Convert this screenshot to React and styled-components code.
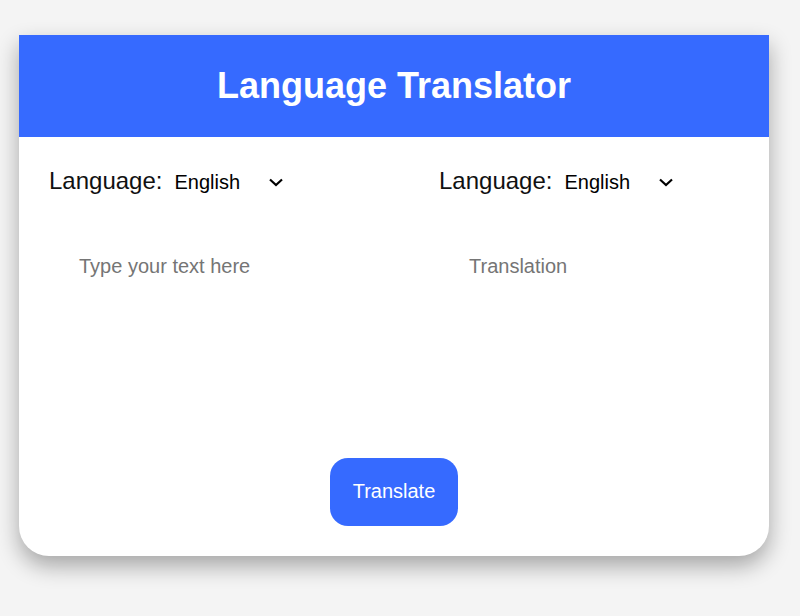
import React, { useState } from "react";
import styled, { createGlobalStyle } from "styled-components";

const GlobalStyle = createGlobalStyle`
  html, body {
    margin: 0;
    background: #f4f4f4;
    font-family: "Liberation Sans", Arial, sans-serif;
  }
`;

const Page = styled.div`
  padding: 35px 0 60px 19px;
`;

const Card = styled.div`
  width: 750px;
  background: #fff;
  border-radius: 0 0 30px 30px;
  box-shadow: 0 10px 22px rgba(0, 0, 0, 0.32);
  overflow: hidden;
`;

const Header = styled.h1`
  margin: 0;
  padding: 30px 0;
  background: #366aff;
  color: #fff;
  font-size: 36px;
  line-height: 42px;
  font-weight: bold;
  text-align: center;
`;

const Body = styled.div`
  padding: 30px;
  display: flex;
  flex-direction: column;
  align-items: center;
`;

const Columns = styled.div`
  align-self: stretch;
  display: grid;
  grid-template-columns: 300px 300px;
  column-gap: 90px;
`;

const Column = styled.div`
  display: flex;
  flex-direction: column;
`;

const LangRow = styled.div`
  display: flex;
  align-items: baseline;
  height: 28px;
`;

const Label = styled.label`
  font-size: 24px;
  color: #111;
`;

const SelectWrap = styled.span`
  position: relative;
  margin-left: 8px;
  display: inline-block;
`;

const Select = styled.select`
  appearance: none;
  -webkit-appearance: none;
  width: 120px;
  padding: 0 0 0 4px;
  border: none;
  outline: none;
  background: transparent;
  font-family: "Liberation Sans", Arial, sans-serif;
  font-size: 20px;
  color: #000;
  cursor: pointer;
`;

const Chevron = styled.svg`
  position: absolute;
  left: 98px;
  top: 50%;
  margin-top: -4px;
  pointer-events: none;
`;

const TextBox = styled.textarea`
  margin-top: 30px;
  height: 203px;
  padding: 30px;
  box-sizing: border-box;
  border: none;
  outline: none;
  resize: none;
  font-family: "Liberation Sans", Arial, sans-serif;
  font-size: 20px;
  line-height: 23px;
  color: #222;
  background: transparent;
  &::placeholder {
    color: #757575;
  }
`;

const Button = styled.button`
  margin-top: 30px;
  padding: 22px 23px 23px;
  border: none;
  border-radius: 18px;
  background: #366aff;
  color: #fff;
  font-family: "Liberation Sans", Arial, sans-serif;
  font-size: 20px;
  line-height: 23px;
  cursor: pointer;
`;

const languages = ["English", "Spanish", "French", "German", "Italian"];

function LanguagePicker({ value, onChange }) {
  return (
    <LangRow>
      <Label>Language:</Label>
      <SelectWrap>
        <Select value={value} onChange={(e) => onChange(e.target.value)}>
          {languages.map((l) => (
            <option key={l} value={l}>{l}</option>
          ))}
        </Select>
        <Chevron width="16" height="9" viewBox="0 0 16 9">
          <path d="M2 1.5 L8 7 L14 1.5" fill="none" stroke="#000" strokeWidth="2.2" />
        </Chevron>
      </SelectWrap>
    </LangRow>
  );
}

export default function App() {
  const [from, setFrom] = useState("English");
  const [to, setTo] = useState("English");
  const [text, setText] = useState("");
  const [result, setResult] = useState("");

  return (
    <>
      <GlobalStyle />
      <Page>
        <Card>
          <Header>Language Translator</Header>
          <Body>
            <Columns>
              <Column>
                <LanguagePicker value={from} onChange={setFrom} />
                <TextBox
                  placeholder="Type your text here"
                  value={text}
                  onChange={(e) => setText(e.target.value)}
                />
              </Column>
              <Column>
                <LanguagePicker value={to} onChange={setTo} />
                <TextBox placeholder="Translation" value={result} readOnly />
              </Column>
            </Columns>
            <Button onClick={() => setResult(text)}>Translate</Button>
          </Body>
        </Card>
      </Page>
    </>
  );
}
